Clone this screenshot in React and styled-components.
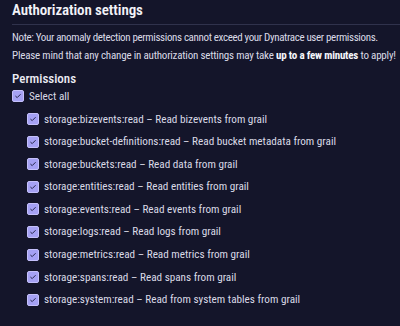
import React from 'react';
import styled, { createGlobalStyle } from 'styled-components';

const GlobalStyle = createGlobalStyle`
    html, body {
        margin: 0;
        padding: 0;
        background: #14152a;
    }
    body {
        font-family: "Roboto Condensed", Roboto, sans-serif;
        color: #e2e2ee;
    }
`;

const Page = styled.div`
    width: 400px;
    height: 326px;
    background: #14152a;
    padding-left: 12px;
    box-sizing: border-box;
    overflow: hidden;
`;

const Title = styled.h2`
    margin: 0;
    font-size: 15px;
    font-weight: 600;
    line-height: 20px;
    letter-spacing: -0.1px;
    color: #f2f2f8;
    padding-bottom: 4px;
    border-bottom: 1px solid #30324c;
`;

const Note = styled.p`
    margin: ${p => p.$top}px 0 0 0;
    font-size: 11px;
    line-height: 18px;
    letter-spacing: ${p => p.$track}px;
    white-space: nowrap;
    color: #dadae6;

    b {
        font-weight: 700;
        color: #f6f6fb;
    }
`;

const SectionTitle = styled.h3`
    margin: 5.5px 0 0 0;
    font-size: 13px;
    font-weight: 500;
    line-height: 18px;
    color: #ececf4;
`;

const List = styled.div`
    display: flex;
    flex-direction: column;
    gap: 6.6px;
    margin-top: 7px;
    padding-left: 15px;
`;

const Row = styled.label`
    display: flex;
    align-items: center;
    gap: 5px;
    height: 16px;
    font-size: 11.2px;
    white-space: nowrap;
    color: #dadae6;
`;

const Box = styled.span`
    width: 12px;
    height: 12px;
    border-radius: 2px;
    background: #a5a1f4;
    border: 1px solid #c4c0fb;
    box-sizing: border-box;
    display: inline-flex;
    align-items: center;
    justify-content: center;
    flex-shrink: 0;
`;

const Check = () => (
    <Box>
        <svg width="8" height="8" viewBox="0 0 8 8">
            <path d="M1.7 4.3 L3.2 5.6 L6.3 2.5" fill="none" stroke="#24254c" strokeWidth="1" strokeLinecap="round" strokeLinejoin="round" />
        </svg>
    </Box>
);

const permissions = [
    ['storage:bizevents:read', 'Read bizevents from grail'],
    ['storage:bucket-definitions:read', 'Read bucket metadata from grail'],
    ['storage:buckets:read', 'Read data from grail'],
    ['storage:entities:read', 'Read entities from grail'],
    ['storage:events:read', 'Read events from grail'],
    ['storage:logs:read', 'Read logs from grail'],
    ['storage:metrics:read', 'Read metrics from grail'],
    ['storage:spans:read', 'Read spans from grail'],
    ['storage:system:read', 'Read from system tables from grail'],
];

const App = () => (
    <>
        <GlobalStyle />
        <Page>
            <Title>Authorization settings</Title>
            <Note $top={3.5} $track={-0.35}>Note: Your anomaly detection permissions cannot exceed your Dynatrace user permissions.</Note>
            <Note $top={0} $track={-0.2}>
                Please mind that any change in authorization settings may take <b>up to a few minutes</b> to apply!
            </Note>
            <SectionTitle>Permissions</SectionTitle>
            <Row>
                <Check />
                Select all
            </Row>
            <List>
                {permissions.map(([scope, desc]) => (
                    <Row key={scope}>
                        <Check />
                        {scope} – {desc}
                    </Row>
                ))}
            </List>
        </Page>
    </>
);

export default App;
